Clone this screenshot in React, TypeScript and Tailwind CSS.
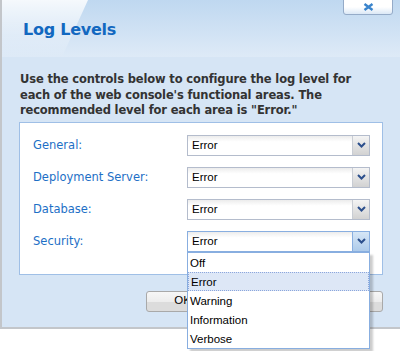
import React from "react";

const areas = ["General:", "Deployment Server:", "Database:", "Security:"];
const levels = ["Off", "Error", "Warning", "Information", "Verbose"];

function Chevron() {
  return (
    <svg width="9" height="6" viewBox="0 0 9 6">
      <path d="M1 1 L4.5 4.5 L8 1" fill="none" stroke="#2c4f8c" strokeWidth="2" />
    </svg>
  );
}

function Select({ open }: { open?: boolean }) {
  return (
    <div
      className={`relative flex h-[21px] w-[183px] border bg-white ${
        open ? "border-[#88aee0]" : "border-[#b4bccc]"
      }`}
    >
      <div className="flex flex-1 items-center bg-gradient-to-b from-[#ececec] via-white via-[30%] to-white pl-[4px] pt-[1px] font-['Liberation_Sans',sans-serif] text-[11.5px] text-black">
        Error
      </div>
      <div
        className={`flex w-[17px] items-center justify-center border-l ${
          open
            ? "border-[#88aee0] bg-gradient-to-b from-[#d6e6f6] to-[#aecbea]"
            : "border-[#c9cdd4] bg-gradient-to-b from-[#f4f4f4] to-[#d2d2d2]"
        }`}
      >
        <Chevron />
      </div>
      {open && (
        <ul className="absolute left-[-1px] top-[20px] z-10 w-[183px] border border-[#88aee0] bg-white font-['Liberation_Sans',sans-serif] text-[11.5px] text-black shadow-[3px_3px_2px_rgba(0,0,0,0.2)]">
          {levels.map((l) => (
            <li
              key={l}
              className={`flex h-[19px] items-center pl-[2px] pt-[4px] ${
                l === "Error" ? "border border-dotted border-[#8ca6dc] bg-[#dde7f6]" : ""
              }`}
            >
              {l}
            </li>
          ))}
        </ul>
      )}
    </div>
  );
}

function Button({ label }: { label: string }) {
  return (
    <button className="h-[21px] w-[73px] rounded-[3px] border border-[#a9a9a9] bg-[linear-gradient(#f7f7f7_0%,#ededed_50%,#dcdcdc_51%,#dcdcdc_100%)] font-['Liberation_Sans',sans-serif] text-[11.5px] text-black">
      {label}
    </button>
  );
}

export default function App() {
  return (
    <div className="relative h-[351px] w-[400px] overflow-hidden bg-white font-['DejaVu_Sans',sans-serif]">
      <div className="flex h-[329px] flex-col border-b-2 border-l-2 border-[#c3c6ca] bg-[#d6e5f5]">
        {/* header */}
        <div className="relative h-[57px] bg-gradient-to-b from-[#bfd8f0] to-[#deeaf7] pl-[21px] pt-[20px]">
          <div className="absolute inset-0 bg-gradient-to-b from-[rgba(255,255,255,0.85)] to-[rgba(255,255,255,0)] [clip-path:polygon(0_0,86px_0,60px_100%,0_100%)]" />
          <h1 className="relative text-[16px] font-bold leading-[20px] tracking-[-0.25px] text-[#1268c0]">Log Levels</h1>
          <button className="absolute right-[7px] top-[-1px] flex h-[16px] w-[50px] items-center justify-center rounded-b-[3px] border border-[#95abc8] bg-gradient-to-b from-white via-white to-[#dbe8f6]">
            <svg width="11" height="8" viewBox="0 0 11 8">
              <path d="M1.5 1 L9.5 7 M9.5 1 L1.5 7" stroke="#3a84cc" strokeWidth="2.4" />
            </svg>
          </button>
        </div>

        {/* body */}
        <div className="pl-[17px] pt-[15px]">
          <p className="ml-[1px] w-[360px] text-[11.5px] font-bold leading-[15.5px] tracking-[-0.15px] text-[#333]">
            Use the controls below to configure the log level for each of the web console's functional areas. The
            recommended level for each area is "Error."
          </p>

          <div className="mt-[3px] flex w-[364px] flex-col gap-[11px] border border-[#9fbfe6] bg-white pb-[22px] pl-[13px] pt-[12px]">
            {areas.map((a, i) => (
              <div key={a} className="flex items-center">
                <span className="w-[154px] pt-[2px] text-[11.5px] text-[#1d6fc6]">{a}</span>
                <Select open={i === areas.length - 1} />
              </div>
            ))}
          </div>

          <div className="mt-[16px] flex gap-[9px] pl-[127px]">
            <Button label="OK" />
            <Button label="Cancel" />
            <Button label="Help" />
          </div>
        </div>
      </div>
    </div>
  );
}
